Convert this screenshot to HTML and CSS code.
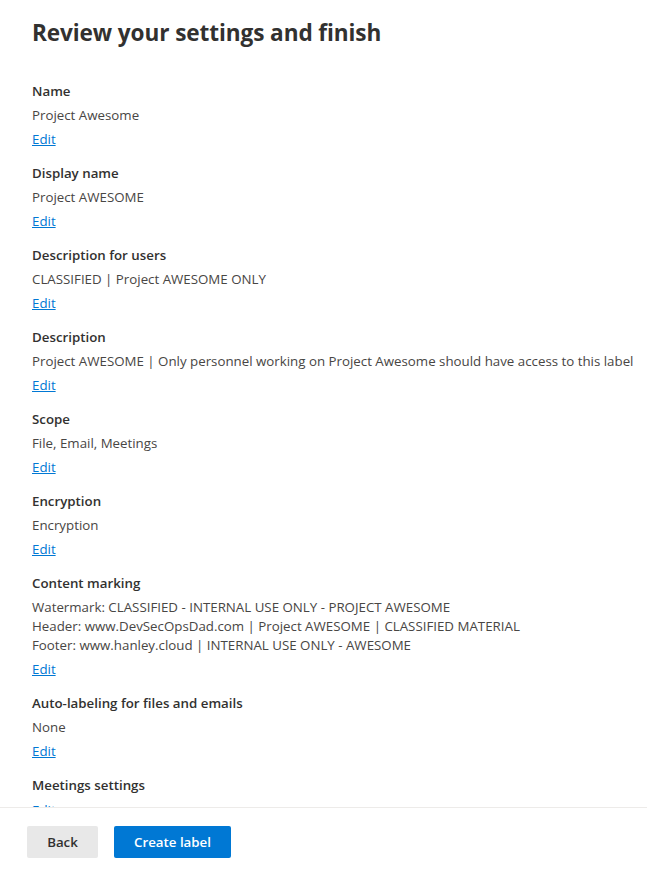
FILE: index.html
```html
<!DOCTYPE html>
<html>
<head>
<meta charset="utf-8">
<link rel="stylesheet" href="styles.css">
</head>
<body>
<div class="page">
  <main class="content">
    <h1 class="title">Review your settings and finish</h1>
    <section class="item">
      <div class="label">Name</div>
      <div class="value">Project Awesome</div>
      <a class="edit" href="#">Edit</a>
    </section>
    <section class="item">
      <div class="label">Display name</div>
      <div class="value">Project AWESOME</div>
      <a class="edit" href="#">Edit</a>
    </section>
    <section class="item">
      <div class="label">Description for users</div>
      <div class="value">CLASSIFIED | Project AWESOME ONLY</div>
      <a class="edit" href="#">Edit</a>
    </section>
    <section class="item">
      <div class="label">Description</div>
      <div class="value">Project AWESOME | Only personnel working on Project Awesome should have access to this label</div>
      <a class="edit" href="#">Edit</a>
    </section>
    <section class="item">
      <div class="label">Scope</div>
      <div class="value">File, Email, Meetings</div>
      <a class="edit" href="#">Edit</a>
    </section>
    <section class="item">
      <div class="label">Encryption</div>
      <div class="value">Encryption</div>
      <a class="edit" href="#">Edit</a>
    </section>
    <section class="item">
      <div class="label">Content marking</div>
      <div class="value">Watermark: CLASSIFIED - INTERNAL USE ONLY - PROJECT AWESOME<br>Header: www.DevSecOpsDad.com | Project AWESOME | CLASSIFIED MATERIAL<br>Footer: www.hanley.cloud | INTERNAL USE ONLY - AWESOME</div>
      <a class="edit" href="#">Edit</a>
    </section>
    <section class="item">
      <div class="label">Auto-labeling for files and emails</div>
      <div class="value">None</div>
      <a class="edit" href="#">Edit</a>
    </section>
    <section class="item">
      <div class="label">Meetings settings</div>
      <a class="edit" href="#">Edit</a>
    </section>
  </main>
  <footer class="footer">
    <button class="btn btn-secondary">Back</button>
    <button class="btn btn-primary">Create label</button>
  </footer>
</div>
</body>
</html>
```
FILE: styles.css
```css
html, body {
  margin: 0;
  padding: 0;
  background: #ffffff;
}
body {
  font-family: "Segoe UI", "Open Sans", "Liberation Sans", sans-serif;
  color: #323130;
  font-size: 13.3px;
}
.page {
  width: 647px;
  height: 873px;
  display: flex;
  flex-direction: column;
}
.content {
  height: 807px;
  overflow: hidden;
  padding: 0 32px;
  box-sizing: border-box;
  flex: none;
}
.title {
  margin: 17px 0 32px 0;
  font-size: 22.6px;
  line-height: 32px;
  font-weight: 700;
  color: #323130;
  letter-spacing: -0.1px;
}
.item {
  display: flex;
  flex-direction: column;
  align-items: flex-start;
  gap: 4.5px;
  margin-bottom: 14px;
}
.label {
  font-size: 13.3px;
  line-height: 20px;
  font-weight: 600;
  color: #323130;
}
.value {
  font-size: 13.3px;
  line-height: 19px;
  color: #484644;
  white-space: nowrap;
}
.edit {
  font-size: 13.3px;
  line-height: 20px;
  color: #0078d4;
  text-decoration: underline;
}
.footer {
  flex: none;
  border-top: 1px solid #edebe9;
  height: 66px;
  display: flex;
  align-items: flex-start;
  padding: 18px 27px 0;
  gap: 16px;
  box-sizing: border-box;
}
.btn {
  height: 32px;
  border-radius: 2px;
  font-family: inherit;
  font-size: 13.3px;
  font-weight: 600;
  border: none;
  padding: 0;
  white-space: nowrap;
  cursor: pointer;
}
.btn-secondary {
  width: 71px;
  background: #e8e8e8;
  color: #323130;
}
.btn-primary {
  width: 117px;
  background: #0078d4;
  color: #ffffff;
}
```
